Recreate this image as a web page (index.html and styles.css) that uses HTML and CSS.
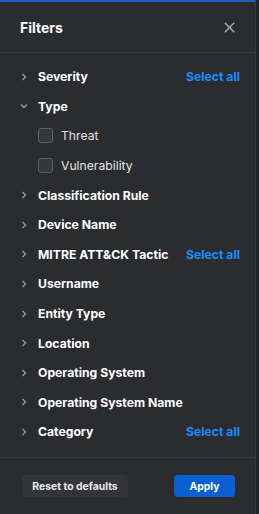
FILE: index.html
```html
<!DOCTYPE html>
<html lang="en">
<head>
    <meta charset="UTF-8">
    <meta name="viewport" content="width=device-width, initial-scale=1.0">
    <title>Filters</title>
    <link rel="stylesheet" href="styles.css">
</head>
<body>
    <div class="panel">
        <div class="header">
            <span class="title">Filters</span>
            <svg class="close" width="11" height="11" viewBox="0 0 11 11">
                <path d="M0.8 0.8 L10.2 10.2 M10.2 0.8 L0.8 10.2" stroke="#a9abae" stroke-width="1.5" fill="none"/>
            </svg>
        </div>

        <div class="list">
            <div class="row">
                <svg class="chev" width="8" height="8" viewBox="0 0 8 8"><path d="M2.5 1 L5.5 4 L2.5 7" stroke="#9b9ca0" stroke-width="1.3" fill="none"/></svg>
                <span class="label">Severity</span>
                <span class="select-all">Select all</span>
            </div>
            <div class="row">
                <svg class="chev" width="8" height="8" viewBox="0 0 8 8"><path d="M1 2.5 L4 5.5 L7 2.5" stroke="#9b9ca0" stroke-width="1.3" fill="none"/></svg>
                <span class="label">Type</span>
            </div>
            <div class="row option">
                <span class="box"></span>
                <span class="option-label">Threat</span>
            </div>
            <div class="row option">
                <span class="box"></span>
                <span class="option-label">Vulnerability</span>
            </div>
            <div class="row">
                <svg class="chev" width="8" height="8" viewBox="0 0 8 8"><path d="M2.5 1 L5.5 4 L2.5 7" stroke="#9b9ca0" stroke-width="1.3" fill="none"/></svg>
                <span class="label">Classification Rule</span>
            </div>
            <div class="row">
                <svg class="chev" width="8" height="8" viewBox="0 0 8 8"><path d="M2.5 1 L5.5 4 L2.5 7" stroke="#9b9ca0" stroke-width="1.3" fill="none"/></svg>
                <span class="label">Device Name</span>
            </div>
            <div class="row">
                <svg class="chev" width="8" height="8" viewBox="0 0 8 8"><path d="M2.5 1 L5.5 4 L2.5 7" stroke="#9b9ca0" stroke-width="1.3" fill="none"/></svg>
                <span class="label">MITRE ATT&amp;CK Tactic</span>
                <span class="select-all">Select all</span>
            </div>
            <div class="row">
                <svg class="chev" width="8" height="8" viewBox="0 0 8 8"><path d="M2.5 1 L5.5 4 L2.5 7" stroke="#9b9ca0" stroke-width="1.3" fill="none"/></svg>
                <span class="label">Username</span>
            </div>
            <div class="row">
                <svg class="chev" width="8" height="8" viewBox="0 0 8 8"><path d="M2.5 1 L5.5 4 L2.5 7" stroke="#9b9ca0" stroke-width="1.3" fill="none"/></svg>
                <span class="label">Entity Type</span>
            </div>
            <div class="row">
                <svg class="chev" width="8" height="8" viewBox="0 0 8 8"><path d="M2.5 1 L5.5 4 L2.5 7" stroke="#9b9ca0" stroke-width="1.3" fill="none"/></svg>
                <span class="label">Location</span>
            </div>
            <div class="row">
                <svg class="chev" width="8" height="8" viewBox="0 0 8 8"><path d="M2.5 1 L5.5 4 L2.5 7" stroke="#9b9ca0" stroke-width="1.3" fill="none"/></svg>
                <span class="label">Operating System</span>
            </div>
            <div class="row">
                <svg class="chev" width="8" height="8" viewBox="0 0 8 8"><path d="M2.5 1 L5.5 4 L2.5 7" stroke="#9b9ca0" stroke-width="1.3" fill="none"/></svg>
                <span class="label">Operating System Name</span>
            </div>
            <div class="row">
                <svg class="chev" width="8" height="8" viewBox="0 0 8 8"><path d="M2.5 1 L5.5 4 L2.5 7" stroke="#9b9ca0" stroke-width="1.3" fill="none"/></svg>
                <span class="label">Category</span>
                <span class="select-all">Select all</span>
            </div>
        </div>

        <div class="footer">
            <button class="btn reset">Reset to defaults</button>
            <button class="btn apply">Apply</button>
        </div>
    </div>
</body>
</html>
```

FILE: styles.css
```css
body {
    margin: 0;
    background: #232427;
    font-family: Inter, "Noto Sans", sans-serif;
}
.panel {
    width: 256px;
    height: 514px;
    box-sizing: border-box;
    background: #2b2c2f;
    border-top: 2px solid #1f5fc4;
    border-right: 1px solid #36373a;
    display: flex;
    flex-direction: column;
}
.header {
    flex-shrink: 0;
    height: 50px;
    display: flex;
    align-items: center;
    justify-content: space-between;
    padding: 0 20px 0 20px;
    border-bottom: 1px solid #3a3b3e;
}
.title {
    color: #ffffff;
    font-size: 14px;
    font-weight: 700;
}
.close {
    margin-right: 0;
}
.list {
    flex-shrink: 0;
    padding-top: 9px;
    display: flex;
    flex-direction: column;
}
.row {
    height: 29.6px;
    flex-shrink: 0;
    display: flex;
    align-items: center;
    padding: 0 15px 0 20px;
}
.chev {
    width: 8px;
    margin-right: 10px;
}
.label {
    flex: 1;
    color: #ffffff;
    font-size: 12.2px;
    font-weight: 700;
}
.select-all {
    color: #1a8cff;
    font-size: 12.2px;
    font-weight: 700;
}
.option {
    padding-left: 38px;
}
.box {
    width: 15px;
    height: 15px;
    box-sizing: border-box;
    border: 1.5px solid #5e6064;
    border-radius: 3px;
    background: #36373a;
    margin-right: 8px;
}
.option-label {
    color: #e6e6e6;
    font-size: 12.2px;
}
.footer {
    flex-shrink: 0;
    box-sizing: border-box;
    margin-top: auto;
    height: 57px;
    border-top: 1px solid #3a3b3e;
    display: flex;
    align-items: flex-start;
    justify-content: space-between;
    padding: 17px 20px 0 22px;
}
.btn {
    height: 22px;
    border: none;
    border-radius: 4px;
    font-family: Inter, "Noto Sans", sans-serif;
    font-size: 10.4px;
    font-weight: 700;
    color: #ffffff;
    padding: 0;
}
.reset {
    width: 106px;
    background: #333437;
    color: #e8e8e8;
}
.apply {
    width: 61px;
    background: #0a5fd3;
}
```
